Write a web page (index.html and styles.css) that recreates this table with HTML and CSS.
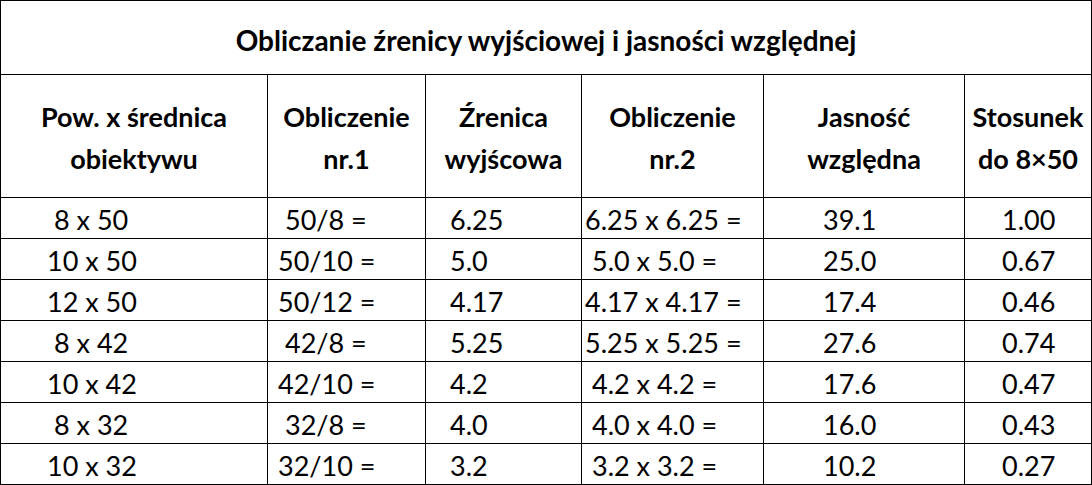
FILE: index.html
```html
<!DOCTYPE html>
<html lang="pl">
<head>
<meta charset="utf-8">
<title>Obliczanie źrenicy wyjściowej i jasności względnej</title>
<link rel="stylesheet" href="styles.css">
</head>
<body>
<table class="calc">
  <colgroup>
    <col class="w1"><col class="w2"><col class="w3"><col class="w4"><col class="w5"><col class="w6">
  </colgroup>
  <thead>
    <tr class="title-row"><th colspan="6">Obliczanie źrenicy wyjściowej i jasności względnej</th></tr>
    <tr class="head-row">
      <th>Pow. x średnica<br>obiektywu</th>
      <th>Obliczenie<br>nr.1</th>
      <th>Źrenica<br>wyjścowa</th>
      <th>Obliczenie<br>nr.2</th>
      <th>Jasność<br>względna</th>
      <th>Stosunek<br>do 8×50</th>
    </tr>
  </thead>
  <tbody>
    <tr><td class="c1 sp">8 x 50</td><td class="c2 sp">50/8 =</td><td class="c3">6.25</td><td class="c4">6.25 x 6.25 =</td><td class="c5">39.1</td><td class="c6">1.00</td></tr>
    <tr><td class="c1">10 x 50</td><td class="c2">50/10 =</td><td class="c3">5.0</td><td class="c4 sp">5.0 x 5.0 =</td><td class="c5">25.0</td><td class="c6">0.67</td></tr>
    <tr><td class="c1">12 x 50</td><td class="c2">50/12 =</td><td class="c3">4.17</td><td class="c4">4.17 x 4.17 =</td><td class="c5">17.4</td><td class="c6">0.46</td></tr>
    <tr><td class="c1 sp">8 x 42</td><td class="c2 sp">42/8 =</td><td class="c3">5.25</td><td class="c4">5.25 x 5.25 =</td><td class="c5">27.6</td><td class="c6">0.74</td></tr>
    <tr><td class="c1">10 x 42</td><td class="c2">42/10 =</td><td class="c3">4.2</td><td class="c4 sp">4.2 x 4.2 =</td><td class="c5">17.6</td><td class="c6">0.47</td></tr>
    <tr><td class="c1 sp">8 x 32</td><td class="c2 sp">32/8 =</td><td class="c3">4.0</td><td class="c4 sp">4.0 x 4.0 =</td><td class="c5">16.0</td><td class="c6">0.43</td></tr>
    <tr><td class="c1">10 x 32</td><td class="c2">32/10 =</td><td class="c3">3.2</td><td class="c4 sp">3.2 x 3.2 =</td><td class="c5">10.2</td><td class="c6">0.27</td></tr>
  </tbody>
</table>
</body>
</html>
```
FILE: styles.css
```css
html, body {
  margin: 0;
  padding: 0;
  background: #fff;
}

.calc {
  width: 1092px;
  table-layout: fixed;
  border-collapse: separate;
  border-spacing: 1px;
  background: #000;
  font-family: Lato, "Open Sans", "Liberation Sans", sans-serif;
  color: #000;
}

.w1 { width: 266px; }
.w2 { width: 157px; }
.w3 { width: 155px; }
.w4 { width: 181px; }
.w5 { width: 200px; }
.w6 { width: 126px; }

.calc th,
.calc td {
  background: #fff;
  white-space: nowrap;
  overflow: hidden;
}

.title-row th {
  height: 67px;
  padding: 6px 0 0;
  font-size: 28px;
  line-height: 67px;
  font-weight: 700;
  text-align: center;
  vertical-align: middle;
}

.head-row th {
  height: 118px;
  padding: 4px 0 0;
  font-size: 27px;
  font-weight: 700;
  line-height: 42px;
  text-align: center;
  vertical-align: middle;
}

.calc td {
  height: 37px;
  padding: 3px 0 0;
  font-size: 27px;
  line-height: 37px;
  text-align: left;
  vertical-align: middle;
}

.calc td.c1 { padding-left: 46px; }
.calc td.c2 { padding-left: 10px; }
.calc td.c3 { padding-left: 24px; }
.calc td.c4 { padding-left: 3px; }
.calc td.c5 { padding-left: 59px; }
.calc td.c6 { padding-left: 37px; }

.sp { text-indent: 7px; }
```
